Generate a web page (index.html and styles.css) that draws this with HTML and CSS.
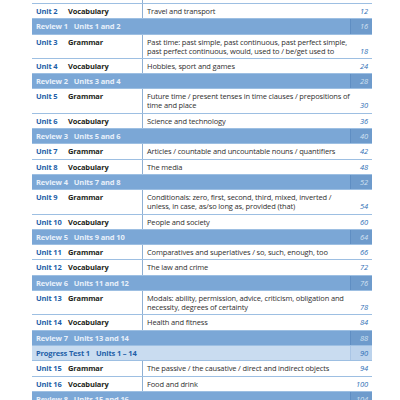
FILE: index.html
```html
<!DOCTYPE html>
<html lang="en">
<head>
  <meta charset="UTF-8">
  <meta name="viewport" content="width=device-width, initial-scale=1.0">
  <title>Contents</title>
  <link rel="stylesheet" href="styles.css">
</head>
<body>
  <div class="contents">
    <div class="row stub">
      <div class="label"></div>
      <div class="topic"></div>
      <div class="page"></div>
    </div>
    <div class="row">
      <div class="label"><span class="num">Unit 2</span><span class="kind">Vocabulary</span></div>
      <div class="topic">Travel and transport</div>
      <div class="page">12</div>
    </div>
    <div class="row review">
      <div class="label"><span>Review 1</span><span>Units 1 and 2</span></div>
      <div class="page">16</div>
    </div>
    <div class="row">
      <div class="label"><span class="num">Unit 3</span><span class="kind">Grammar</span></div>
      <div class="topic">Past time: past simple, past continuous, past perfect simple,<br>past perfect continuous, would, used to / be/get used to</div>
      <div class="page">18</div>
    </div>
    <div class="row">
      <div class="label"><span class="num">Unit 4</span><span class="kind">Vocabulary</span></div>
      <div class="topic">Hobbies, sport and games</div>
      <div class="page">24</div>
    </div>
    <div class="row review">
      <div class="label"><span>Review 2</span><span>Units 3 and 4</span></div>
      <div class="page">28</div>
    </div>
    <div class="row">
      <div class="label"><span class="num">Unit 5</span><span class="kind">Grammar</span></div>
      <div class="topic">Future time / present tenses in time clauses / prepositions of<br>time and place</div>
      <div class="page">30</div>
    </div>
    <div class="row">
      <div class="label"><span class="num">Unit 6</span><span class="kind">Vocabulary</span></div>
      <div class="topic">Science and technology</div>
      <div class="page">36</div>
    </div>
    <div class="row review">
      <div class="label"><span>Review 3</span><span>Units 5 and 6</span></div>
      <div class="page">40</div>
    </div>
    <div class="row">
      <div class="label"><span class="num">Unit 7</span><span class="kind">Grammar</span></div>
      <div class="topic">Articles / countable and uncountable nouns / quantifiers</div>
      <div class="page">42</div>
    </div>
    <div class="row">
      <div class="label"><span class="num">Unit 8</span><span class="kind">Vocabulary</span></div>
      <div class="topic">The media</div>
      <div class="page">48</div>
    </div>
    <div class="row review">
      <div class="label"><span>Review 4</span><span>Units 7 and 8</span></div>
      <div class="page">52</div>
    </div>
    <div class="row">
      <div class="label"><span class="num">Unit 9</span><span class="kind">Grammar</span></div>
      <div class="topic">Conditionals: zero, first, second, third, mixed, inverted /<br>unless, in case, as/so long as, provided (that)</div>
      <div class="page">54</div>
    </div>
    <div class="row">
      <div class="label"><span class="num">Unit 10</span><span class="kind">Vocabulary</span></div>
      <div class="topic">People and society</div>
      <div class="page">60</div>
    </div>
    <div class="row review">
      <div class="label"><span>Review 5</span><span>Units 9 and 10</span></div>
      <div class="page">64</div>
    </div>
    <div class="row">
      <div class="label"><span class="num">Unit 11</span><span class="kind">Grammar</span></div>
      <div class="topic">Comparatives and superlatives / so, such, enough, too</div>
      <div class="page">66</div>
    </div>
    <div class="row">
      <div class="label"><span class="num">Unit 12</span><span class="kind">Vocabulary</span></div>
      <div class="topic">The law and crime</div>
      <div class="page">72</div>
    </div>
    <div class="row review">
      <div class="label"><span>Review 6</span><span>Units 11 and 12</span></div>
      <div class="page">76</div>
    </div>
    <div class="row">
      <div class="label"><span class="num">Unit 13</span><span class="kind">Grammar</span></div>
      <div class="topic">Modals: ability, permission, advice, criticism, obligation and<br>necessity, degrees of certainty</div>
      <div class="page">78</div>
    </div>
    <div class="row">
      <div class="label"><span class="num">Unit 14</span><span class="kind">Vocabulary</span></div>
      <div class="topic">Health and fitness</div>
      <div class="page">84</div>
    </div>
    <div class="row review">
      <div class="label"><span>Review 7</span><span>Units 13 and 14</span></div>
      <div class="page">88</div>
    </div>
    <div class="row review progress">
      <div class="label"><span>Progress Test 1</span><span>Units 1 – 14</span></div>
      <div class="page">90</div>
    </div>
    <div class="row">
      <div class="label"><span class="num">Unit 15</span><span class="kind">Grammar</span></div>
      <div class="topic">The passive / the causative / direct and indirect objects</div>
      <div class="page">94</div>
    </div>
    <div class="row">
      <div class="label"><span class="num">Unit 16</span><span class="kind">Vocabulary</span></div>
      <div class="topic">Food and drink</div>
      <div class="page">100</div>
    </div>
    <div class="row review">
      <div class="label"><span>Review 8</span><span>Units 15 and 16</span></div>
      <div class="page">104</div>
    </div>
  </div>
</body>
</html>
```
FILE: styles.css
```css
:root {
  --unit-blue: #1f5fa8;
  --band: #7ba7d6;
  --band-page: #6e9bcc;
  --band-text: #e8f0fa;
  --progress: #c9dcf0;
  --rule: #9dbfe2;
  --divider: #8fb0d3;
}

body {
  margin: 0;
  background: #fff;
  font-family: "Open Sans", "Noto Sans", sans-serif;
  font-size: 7.5px;
  letter-spacing: -0.15px;
  color: #2b2b2b;
}

.contents {
  width: 340px;
  margin-left: 32px;
}

.row {
  display: grid;
  grid-template-columns: 110px 208px 22px;
  border-top: 1px solid var(--rule);
  line-height: 9px;
}

.row > div {
  padding: 3px 4px 2.3px;
}

/* the row above is scrolled out of view, only its divider peeks in */
.stub {
  height: 3px;
  border-top: 0;
}

.stub > div {
  padding: 0;
}

.label {
  display: flex;
  font-weight: 700;
  white-space: nowrap;
}

.num {
  width: 32px;
  color: var(--unit-blue);
}

.kind {
  color: #231f20;
}

.topic {
  border-left: 1px solid var(--divider);
  color: #2f2f2f;
  white-space: nowrap;
}

.page {
  align-self: end;
  text-align: right;
  font-style: italic;
  color: #2f6fb6;
}

.review {
  grid-template-columns: 318px 22px;
  background: var(--band);
}

.review .label {
  gap: 6px;
  color: var(--band-text);
}

.review .page {
  align-self: stretch;
  background: var(--band-page);
  border-left: 1px solid #5f8ec3;
  color: #d3e2f2;
}

.progress {
  background: var(--progress);
}

.progress .label {
  color: var(--unit-blue);
}

.progress .page {
  background: #bcd3ec;
  border-left-color: #a9c5e5;
  color: #2f6fb6;
}
```
